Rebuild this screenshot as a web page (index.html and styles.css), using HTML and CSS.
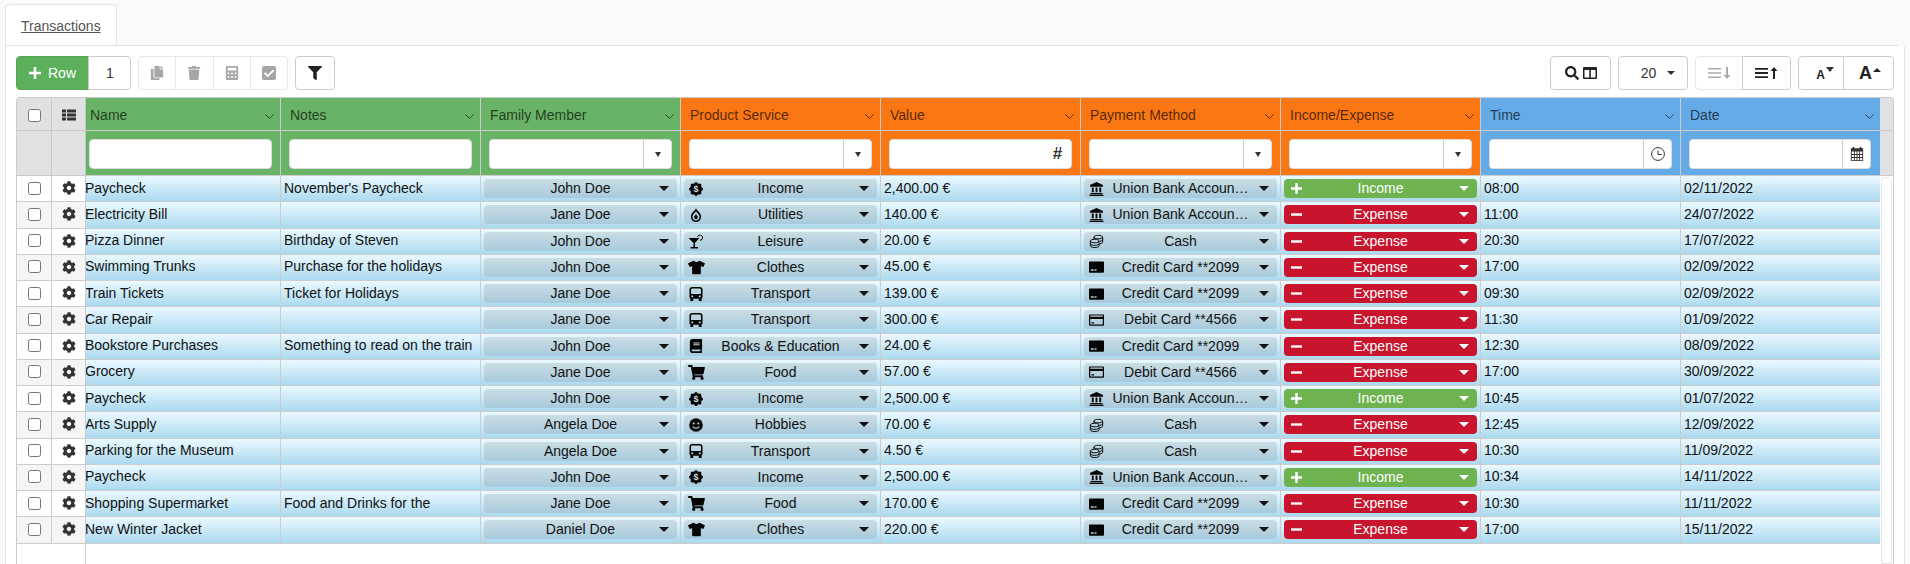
FILE: index.html
```
<!DOCTYPE html>
<html lang="en">
<head>
<meta charset="utf-8">
<title>Transactions</title>
<link rel="stylesheet" href="styles.css">
</head>
<body>
<svg class="defs" xmlns="http://www.w3.org/2000/svg">
<symbol id="gear" viewBox="0 0 512 512"><path d="M487.4 315.7l-42.6-24.6c4.3-23.2 4.3-47 0-70.2l42.6-24.6c4.9-2.8 7.1-8.6 5.5-14-11.1-35.6-30-67.8-54.7-94.6-3.8-4.1-10-5.1-14.8-2.3L380.8 110c-17.9-15.4-38.5-27.3-60.8-35.1V25.8c0-5.6-3.9-10.5-9.4-11.7-36.7-8.2-74.3-7.8-109.2 0-5.5 1.2-9.4 6.1-9.4 11.7V75c-22.2 7.9-42.8 19.8-60.8 35.1L88.7 85.5c-4.9-2.8-11-1.9-14.8 2.3-24.7 26.7-43.6 58.9-54.7 94.6-1.7 5.4.6 11.2 5.5 14L67.3 221c-4.3 23.2-4.3 47 0 70.2l-42.6 24.6c-4.9 2.8-7.1 8.6-5.5 14 11.1 35.6 30 67.8 54.7 94.6 3.8 4.1 10 5.1 14.8 2.3l42.6-24.6c17.9 15.4 38.5 27.3 60.8 35.1v49.2c0 5.6 3.9 10.5 9.4 11.7 36.7 8.2 74.3 7.8 109.2 0 5.5-1.2 9.4-6.1 9.4-11.7v-49.2c22.2-7.9 42.8-19.8 60.8-35.1l42.6 24.6c4.9 2.8 11 1.9 14.8-2.3 24.7-26.7 43.6-58.9 54.7-94.6 1.5-5.5-.7-11.3-5.6-14.1zM256 336c-44.1 0-80-35.9-80-80s35.9-80 80-80 80 35.9 80 80-35.9 80-80 80z"/></symbol>
<symbol id="copy" viewBox="0 0 448 512"><path d="M320 448v40c0 13.255-10.745 24-24 24H24c-13.255 0-24-10.745-24-24V120c0-13.255 10.745-24 24-24h72v296c0 30.879 25.121 56 56 56h168zm0-344V0H152c-13.255 0-24 10.745-24 24v368c0 13.255 10.745 24 24 24h272c13.255 0 24-10.745 24-24V128H344c-13.2 0-24-10.8-24-24zm120.971-31.029L375.029 7.029A24 24 0 0 0 358.059 0H352v96h96v-6.059a24 24 0 0 0-7.029-16.97z"/></symbol>
<symbol id="trash" viewBox="0 0 448 512"><path d="M432 32H312l-9.4-18.7A24 24 0 0 0 281.1 0H166.8a23.72 23.72 0 0 0-21.4 13.3L136 32H16A16 16 0 0 0 0 48v32a16 16 0 0 0 16 16h416a16 16 0 0 0 16-16V48a16 16 0 0 0-16-16zM53.2 467a48 48 0 0 0 47.9 45h245.8a48 48 0 0 0 47.9-45L416 128H32z"/></symbol>
<symbol id="calc" viewBox="0 0 14 16"><path fill-rule="evenodd" d="M1.5 0h11A1.5 1.5 0 0 1 14 1.500v13a1.500 1.500 0 0 1-1.500 1.500h-11A1.500 1.500 0 0 1 0 14.500v-13A1.500 1.500 0 0 1 1.500 0z M2 2v3h10V2z M2 7.500v2h2v-2z M6 7.500v2h2v-2z M10 7.500v2h2v-2z M2 11.500v2h2v-2z M6 11.500v2h2v-2z M10 11.500v2h2v-2z"/></symbol>
<symbol id="check" viewBox="0 0 14 14"><path fill-rule="evenodd" d="M2 0h10a2 2 0 0 1 2 2v10a2 2 0 0 1-2 2H2a2 2 0 0 1-2-2V2a2 2 0 0 1 2-2z M11 3.500 5.700 8.800 3.200 6.300 1.900 7.600l3.800 3.800 6.600-6.600z"/></symbol>
<symbol id="filter" viewBox="0 0 512 512"><path d="M487.976 0H24.028C2.71 0-8.047 25.866 7.058 40.971L192 225.941V432c0 7.831 3.821 15.17 10.237 19.662l80 55.98C298.02 518.69 320 507.493 320 487.98V225.941l184.947-184.97C520.021 25.896 509.338 0 487.976 0z"/></symbol>
<symbol id="search" viewBox="0 0 512 512"><path d="M505 442.7L405.3 343c-4.5-4.5-10.6-7-17-7H372c27.6-35.3 44-79.7 44-128C416 93.1 322.9 0 208 0S0 93.1 0 208s93.1 208 208 208c48.3 0 92.7-16.4 128-44v16.3c0 6.4 2.500 12.500 7 17l99.7 99.7c9.4 9.4 24.600 9.400 33.900 0l28.300-28.300c9.400-9.400 9.400-24.600.1-34zM208 336c-70.700 0-128-57.200-128-128 0-70.700 57.200-128 128-128 70.700 0 128 57.200 128 128 0 70.700-57.200 128-128 128z"/></symbol>
<symbol id="columns" viewBox="0 0 14 12"><path fill-rule="evenodd" d="M1 0h12a1 1 0 0 1 1 1v10a1 1 0 0 1-1 1H1a1 1 0 0 1-1-1V1a1 1 0 0 1 1-1z M1.500 3v7.500h4.700V3z M7.800 3v7.500h4.700V3z"/></symbol>
<symbol id="thlist" viewBox="0 0 14 11"><path d="M0 0h4v3H0z M5 0h9v3H5z M0 4h4v3H0z M5 4h9v3H5z M0 8h4v3H0z M5 8h9v3H5z"/></symbol>
<symbol id="lines-down" viewBox="0 0 23 12"><path d="M0 1h13v1.600H0z M0 5.200h13v1.600H0z M0 9.400h13v1.600H0z M18 0h2v8h2.500L19 12l-3.500-4H18z"/></symbol>
<symbol id="lines-up" viewBox="0 0 23 12"><path d="M0 1h13v1.800H0z M0 5.100h13v1.800H0z M0 9.200h13v1.800H0z M18 12h2V4h2.500L19 0l-3.500 4H18z"/></symbol>
<symbol id="chev" viewBox="0 0 9 5"><path d="M.5.500 4.500 4.500 8.500.500" fill="none" stroke="currentColor"/></symbol>
<symbol id="plus" viewBox="0 0 12 12"><path d="M4.700 0h2.600v4.700H12v2.600H7.300V12H4.700V7.300H0V4.700h4.700z"/></symbol>
<symbol id="minus" viewBox="0 0 12 12"><path d="M0 4.700h12v2.600H0z"/></symbol>
<symbol id="clock" viewBox="0 0 14 14"><circle cx="7" cy="7" r="6.400" fill="none" stroke="currentColor"/><path d="M7 3.500V7.500H10.500" fill="none" stroke="currentColor"/></symbol>
<symbol id="calendar" viewBox="0 0 14 16"><path fill-rule="evenodd" d="M2 0h2v1.500h6V0h2v1.500h2V16H0V1.500h2z M1 5v3h2.500V5z M4.500 5v3h2V5z M7.500 5v3h2V5z M10.500 5v3H13V5z M1 9v2.500h2.500V9z M4.500 9v2.500h2V9z M7.500 9v2.500h2V9z M10.500 9v2.500H13V9z M1 12.500V15h2.500v-2.500z M4.500 12.500V15h2v-2.500z M7.500 12.500V15h2v-2.500z M10.500 12.500V15H13v-2.500z"/></symbol>
<symbol id="badge" viewBox="0 0 14 14"><circle cx="7" cy="7" r="6"/><circle cx="7" cy="1.500" r="1.500"/><circle cx="7" cy="12.500" r="1.500"/><circle cx="1.500" cy="7" r="1.500"/><circle cx="12.500" cy="7" r="1.500"/><circle cx="3.100" cy="3.100" r="1.500"/><circle cx="10.900" cy="3.100" r="1.500"/><circle cx="3.100" cy="10.900" r="1.500"/><circle cx="10.900" cy="10.900" r="1.500"/><text x="7" y="10" text-anchor="middle" font-size="9" font-weight="700" font-family="Liberation Sans, sans-serif" fill="#c8dce3">$</text></symbol>
<symbol id="drop" viewBox="0 0 12 15"><path fill-rule="evenodd" d="M6 0c.3 2.500 5.500 5 5.500 9.500a5.500 5.500 0 0 1-11 0C.5 5 5.700 2.500 6 0z M6 3.500C5 5.500 2.200 7 2.200 9.500a3.800 3.800 0 0 0 7.600 0C9.800 7 7 5.500 6 3.500z M6 6.500c.3 1 2 2 2 3.500a2 2 0 0 1-4 0c0-1.500 1.700-2.500 2-3.500z"/></symbol>
<symbol id="cocktail" viewBox="0 0 16 15"><path d="M0 4h11L6.500 9v4h3v1.500H2V13h3V9z"/><path d="M9 3a2.600 2.600 0 1 1 2.500 3.300" fill="none" stroke="currentColor"/></symbol>
<symbol id="shirt" viewBox="0 0 640 512"><path d="M631.200 96.500L436.500.1c-5.500-2.700-12.200-1-15.700 4C408.100 22.600 369.600 48 320 48S231.900 22.600 219.200 4.100c-3.500-5-10.200-6.800-15.700-4L8.800 96.500c-7.100 3.500-10 12-6.500 19l57.200 114.500c3.500 7.100 12 10 19 6.500l56.600-27.700c9.400-4.600 20.500 2.200 20.500 12.700V480c0 17.700 14.300 32 32 32h264c17.700 0 32-14.300 32-32V220.600c0-10.600 11-17.300 20.500-12.700l56.600 27.700c7.100 3.500 15.600.6 19-6.500l57.300-114.500c3.500-7.100.6-15.600-6.600-19.100z"/></symbol>
<symbol id="bus" viewBox="0 0 14 15"><path fill-rule="evenodd" d="M3 0h8a3 3 0 0 1 3 3v8a1.500 1.500 0 0 1-1 1.400V15h-3v-2.500H4V15H1v-2.600A1.500 1.500 0 0 1 0 11V3a3 3 0 0 1 3-3z M3 1.700A1.300 1.300 0 0 0 1.700 3v4.500h10.600V3A1.300 1.300 0 0 0 11 1.700z M2 9v2h2V9z M10 9v2h2V9z"/></symbol>
<symbol id="book" viewBox="0 0 448 512"><path d="M448 360V24c0-13.300-10.700-24-24-24H96C43 0 0 43 0 96v320c0 53 43 96 96 96h328c13.300 0 24-10.700 24-24v-16c0-7.500-3.500-14.300-8.900-18.700-4.200-15.400-4.200-59.300 0-74.700 5.400-4.300 8.900-11.100 8.900-18.600zM128 134c0-3.300 2.700-6 6-6h212c3.300 0 6 2.700 6 6v20c0 3.300-2.700 6-6 6H134c-3.300 0-6-2.700-6-6v-20zm0 64c0-3.300 2.700-6 6-6h212c3.300 0 6 2.700 6 6v20c0 3.300-2.700 6-6 6H134c-3.300 0-6-2.700-6-6v-20zm253.400 250H96c-17.700 0-32-14.300-32-32 0-17.600 14.400-32 32-32h285.400c-1.900 17.100-1.900 46.900 0 64z"/></symbol>
<symbol id="cart" viewBox="0 0 576 512"><path d="M528.120 301.319l47.273-208C578.806 78.301 567.391 64 551.990 64H159.208l-9.166-44.810C147.758 8.021 137.930 0 126.529 0H24C10.745 0 0 10.745 0 24v16c0 13.255 10.745 24 24 24h69.883l70.248 343.435C147.325 417.100 136 435.222 136 456c0 30.928 25.072 56 56 56s56-25.072 56-56c0-15.674-6.447-29.835-16.824-40h209.647C430.447 426.165 424 440.326 424 456c0 30.928 25.072 56 56 56s56-25.072 56-56c0-22.172-12.888-41.332-31.579-50.405l5.517-24.276c3.413-15.018-8.002-29.319-23.403-29.319H218.117l-6.545-32h293.145c11.206 0 20.920-7.754 23.403-18.681z"/></symbol>
<symbol id="smile" viewBox="0 0 14 14"><circle cx="7" cy="7" r="6.800"/><circle cx="4.700" cy="5.400" r="1" fill="#c8dce3"/><circle cx="9.300" cy="5.400" r="1" fill="#c8dce3"/><path d="M3.800 8.600c1.600 2.100 4.800 2.100 6.400 0" fill="none" stroke="#c8dce3" stroke-width="1.100"/></symbol>
<symbol id="bank" viewBox="0 0 16 15"><path d="M8 0L1 3.300V5h14V3.300z M3 6h2v5H3z M7 6h2v5H7z M11 6h2v5h-2z M1.500 11.800h13V13h-13z M.5 13.700h15V15H.5z"/></symbol>
<symbol id="coins" viewBox="0 0 16 16"><g fill="none" stroke="currentColor" stroke-width="1.100"><path d="M5 3.500c0-1.100 2.200-2 5-2s5 .9 5 2-2.200 2-5 2-5-.9-5-2z M5 3.500v2.500 M15 3.500v6c0 .8-1 1.400-3 1.800 M15 6.500c0 .8-1 1.400-3 1.800"/><path d="M1 8c0-1.100 2.200-2 5-2s5 .9 5 2-2.200 2-5 2-5-.9-5-2z M1 8v5.500c0 1.100 2.200 2 5 2s5-.9 5-2V8 M1 11c0 1.100 2.200 2 5 2s5-.9 5-2"/></g></symbol>
<symbol id="credit" viewBox="0 0 16 12"><path fill-rule="evenodd" d="M1 0h14a1 1 0 0 1 1 1v10a1 1 0 0 1-1 1H1a1 1 0 0 1-1-1V1a1 1 0 0 1 1-1z M2 8.500V10h3V8.500z M6 8.500V10h2V8.500z"/></symbol>
<symbol id="debit" viewBox="0 0 16 12"><path fill-rule="evenodd" d="M1 0h14a1 1 0 0 1 1 1v10a1 1 0 0 1-1 1H1a1 1 0 0 1-1-1V1a1 1 0 0 1 1-1z M1.300 1.200v1.300h13.400V1.200z M1.300 5v5.800h13.400V5z M2.500 8.500V9.700h3V8.500z"/></symbol>
</svg>

<nav class="tabs"><a class="tab" href="#">Transactions</a></nav>

<main class="panel">
<div class="toolbar">
  <div class="group">
    <button class="btn primary"><svg class="ic ic12"><use href="#plus"/></svg>Row</button>
    <span class="btn count">1</span>
  </div>
  <div class="group disabled">
    <button class="btn sq"><svg class="ic ic14"><use href="#copy"/></svg></button>
    <button class="btn sq"><svg class="ic ic14"><use href="#trash"/></svg></button>
    <button class="btn sq"><svg class="ic ic14"><use href="#calc"/></svg></button>
    <button class="btn sq"><svg class="ic ic14"><use href="#check"/></svg></button>
  </div>
  <button class="btn filter"><svg class="ic ic14"><use href="#filter"/></svg></button>
  <div class="spacer"></div>
  <button class="btn search"><svg class="ic ic14"><use href="#search"/></svg><svg class="ic ic14"><use href="#columns"/></svg></button>
  <button class="btn pager">20<span class="caret small"></span></button>
  <div class="group">
    <button class="btn sort off"><svg class="ic sortic"><use href="#lines-down"/></svg></button>
    <button class="btn sort on"><svg class="ic sortic"><use href="#lines-up"/></svg></button>
  </div>
  <div class="group">
    <button class="btn font dec"><span class="a-small">A</span><span class="caret small up-small"></span></button>
    <button class="btn font inc-f"><span class="a-big">A</span><span class="caret-up"></span></button>
  </div>
</div>

<section class="grid">
  <div class="row head h1">
    <div class="c side"><input type="checkbox"></div>
    <div class="c side"><svg class="ic ic14"><use href="#thlist"/></svg></div>
    <div class="c title green first">Name<svg class="chev"><use href="#chev"/></svg></div>
    <div class="c title green">Notes<svg class="chev"><use href="#chev"/></svg></div>
    <div class="c title green">Family Member<svg class="chev"><use href="#chev"/></svg></div>
    <div class="c title orange">Product Service<svg class="chev"><use href="#chev"/></svg></div>
    <div class="c title orange">Value<svg class="chev"><use href="#chev"/></svg></div>
    <div class="c title orange">Payment Method<svg class="chev"><use href="#chev"/></svg></div>
    <div class="c title orange">Income/Expense<svg class="chev"><use href="#chev"/></svg></div>
    <div class="c title blue">Time<svg class="chev"><use href="#chev"/></svg></div>
    <div class="c title blue last">Date<svg class="chev"><use href="#chev"/></svg></div>
    <div class="c gutter"></div>
  </div>
  <div class="row head h2">
    <div class="c side"></div>
    <div class="c side"></div>
    <div class="c flt green first"><div class="fld"><input></div></div>
    <div class="c flt green"><div class="fld"><input></div></div>
    <div class="c flt green"><div class="fld"><input><span class="addon"><span class="caret dark"></span></span></div></div>
    <div class="c flt orange"><div class="fld"><input><span class="addon"><span class="caret dark"></span></span></div></div>
    <div class="c flt orange"><div class="fld"><input><span class="addon plain">#</span></div></div>
    <div class="c flt orange"><div class="fld"><input><span class="addon"><span class="caret dark"></span></span></div></div>
    <div class="c flt orange"><div class="fld"><input><span class="addon"><span class="caret dark"></span></span></div></div>
    <div class="c flt blue"><div class="fld"><input><span class="addon"><svg class="ic ic14"><use href="#clock"/></svg></span></div></div>
    <div class="c flt blue last"><div class="fld"><input><span class="addon"><svg class="ic ic14"><use href="#calendar"/></svg></span></div></div>
    <div class="c gutter"></div>
  </div>
  <div class="body">
    <div class="rows">

      <div class="row data"><div class="c side"><input type="checkbox"></div><div class="c side"><svg class="ic gear"><use href="#gear"/></svg></div><div class="c txt first">Paycheck</div><div class="c txt">November's Paycheck</div><div class="c sel"><div class="pill"><i></i><span>John Doe</span><b class="caret"></b></div></div><div class="c sel"><div class="pill"><svg class="ic pi"><use href="#badge"/></svg><span>Income</span><b class="caret"></b></div></div><div class="c txt">2,400.00 €</div><div class="c sel"><div class="pill"><svg class="ic pi w"><use href="#bank"/></svg><span>Union Bank Accoun…</span><b class="caret"></b></div></div><div class="c sel"><div class="pill inc"><svg class="ic pm"><use href="#plus"/></svg><span>Income</span><b class="caret"></b></div></div><div class="c txt">08:00</div><div class="c txt last">02/11/2022</div></div>

      <div class="row data"><div class="c side"><input type="checkbox"></div><div class="c side"><svg class="ic gear"><use href="#gear"/></svg></div><div class="c txt first">Electricity Bill</div><div class="c txt"></div><div class="c sel"><div class="pill"><i></i><span>Jane Doe</span><b class="caret"></b></div></div><div class="c sel"><div class="pill"><svg class="ic pi"><use href="#drop"/></svg><span>Utilities</span><b class="caret"></b></div></div><div class="c txt">140.00 €</div><div class="c sel"><div class="pill"><svg class="ic pi w"><use href="#bank"/></svg><span>Union Bank Accoun…</span><b class="caret"></b></div></div><div class="c sel"><div class="pill exp"><svg class="ic pm"><use href="#minus"/></svg><span>Expense</span><b class="caret"></b></div></div><div class="c txt">11:00</div><div class="c txt last">24/07/2022</div></div>

      <div class="row data"><div class="c side"><input type="checkbox"></div><div class="c side"><svg class="ic gear"><use href="#gear"/></svg></div><div class="c txt first">Pizza Dinner</div><div class="c txt">Birthday of Steven</div><div class="c sel"><div class="pill"><i></i><span>John Doe</span><b class="caret"></b></div></div><div class="c sel"><div class="pill"><svg class="ic pi xw"><use href="#cocktail"/></svg><span>Leisure</span><b class="caret"></b></div></div><div class="c txt">20.00 €</div><div class="c sel"><div class="pill"><svg class="ic pi w"><use href="#coins"/></svg><span>Cash</span><b class="caret"></b></div></div><div class="c sel"><div class="pill exp"><svg class="ic pm"><use href="#minus"/></svg><span>Expense</span><b class="caret"></b></div></div><div class="c txt">20:30</div><div class="c txt last">17/07/2022</div></div>

      <div class="row data"><div class="c side"><input type="checkbox"></div><div class="c side"><svg class="ic gear"><use href="#gear"/></svg></div><div class="c txt first">Swimming Trunks</div><div class="c txt">Purchase for the holidays</div><div class="c sel"><div class="pill"><i></i><span>John Doe</span><b class="caret"></b></div></div><div class="c sel"><div class="pill"><svg class="ic pi xw"><use href="#shirt"/></svg><span>Clothes</span><b class="caret"></b></div></div><div class="c txt">45.00 €</div><div class="c sel"><div class="pill"><svg class="ic pi w"><use href="#credit"/></svg><span>Credit Card **2099</span><b class="caret"></b></div></div><div class="c sel"><div class="pill exp"><svg class="ic pm"><use href="#minus"/></svg><span>Expense</span><b class="caret"></b></div></div><div class="c txt">17:00</div><div class="c txt last">02/09/2022</div></div>

      <div class="row data"><div class="c side"><input type="checkbox"></div><div class="c side"><svg class="ic gear"><use href="#gear"/></svg></div><div class="c txt first">Train Tickets</div><div class="c txt">Ticket for Holidays</div><div class="c sel"><div class="pill"><i></i><span>Jane Doe</span><b class="caret"></b></div></div><div class="c sel"><div class="pill"><svg class="ic pi"><use href="#bus"/></svg><span>Transport</span><b class="caret"></b></div></div><div class="c txt">139.00 €</div><div class="c sel"><div class="pill"><svg class="ic pi w"><use href="#credit"/></svg><span>Credit Card **2099</span><b class="caret"></b></div></div><div class="c sel"><div class="pill exp"><svg class="ic pm"><use href="#minus"/></svg><span>Expense</span><b class="caret"></b></div></div><div class="c txt">09:30</div><div class="c txt last">02/09/2022</div></div>

      <div class="row data"><div class="c side"><input type="checkbox"></div><div class="c side"><svg class="ic gear"><use href="#gear"/></svg></div><div class="c txt first">Car Repair</div><div class="c txt"></div><div class="c sel"><div class="pill"><i></i><span>Jane Doe</span><b class="caret"></b></div></div><div class="c sel"><div class="pill"><svg class="ic pi"><use href="#bus"/></svg><span>Transport</span><b class="caret"></b></div></div><div class="c txt">300.00 €</div><div class="c sel"><div class="pill"><svg class="ic pi w"><use href="#debit"/></svg><span>Debit Card **4566</span><b class="caret"></b></div></div><div class="c sel"><div class="pill exp"><svg class="ic pm"><use href="#minus"/></svg><span>Expense</span><b class="caret"></b></div></div><div class="c txt">11:30</div><div class="c txt last">01/09/2022</div></div>

      <div class="row data"><div class="c side"><input type="checkbox"></div><div class="c side"><svg class="ic gear"><use href="#gear"/></svg></div><div class="c txt first">Bookstore Purchases</div><div class="c txt">Something to read on the train</div><div class="c sel"><div class="pill"><i></i><span>John Doe</span><b class="caret"></b></div></div><div class="c sel"><div class="pill"><svg class="ic pi"><use href="#book"/></svg><span>Books &amp; Education</span><b class="caret"></b></div></div><div class="c txt">24.00 €</div><div class="c sel"><div class="pill"><svg class="ic pi w"><use href="#credit"/></svg><span>Credit Card **2099</span><b class="caret"></b></div></div><div class="c sel"><div class="pill exp"><svg class="ic pm"><use href="#minus"/></svg><span>Expense</span><b class="caret"></b></div></div><div class="c txt">12:30</div><div class="c txt last">08/09/2022</div></div>

      <div class="row data"><div class="c side"><input type="checkbox"></div><div class="c side"><svg class="ic gear"><use href="#gear"/></svg></div><div class="c txt first">Grocery</div><div class="c txt"></div><div class="c sel"><div class="pill"><i></i><span>Jane Doe</span><b class="caret"></b></div></div><div class="c sel"><div class="pill"><svg class="ic pi xw"><use href="#cart"/></svg><span>Food</span><b class="caret"></b></div></div><div class="c txt">57.00 €</div><div class="c sel"><div class="pill"><svg class="ic pi w"><use href="#debit"/></svg><span>Debit Card **4566</span><b class="caret"></b></div></div><div class="c sel"><div class="pill exp"><svg class="ic pm"><use href="#minus"/></svg><span>Expense</span><b class="caret"></b></div></div><div class="c txt">17:00</div><div class="c txt last">30/09/2022</div></div>

      <div class="row data"><div class="c side"><input type="checkbox"></div><div class="c side"><svg class="ic gear"><use href="#gear"/></svg></div><div class="c txt first">Paycheck</div><div class="c txt"></div><div class="c sel"><div class="pill"><i></i><span>John Doe</span><b class="caret"></b></div></div><div class="c sel"><div class="pill"><svg class="ic pi"><use href="#badge"/></svg><span>Income</span><b class="caret"></b></div></div><div class="c txt">2,500.00 €</div><div class="c sel"><div class="pill"><svg class="ic pi w"><use href="#bank"/></svg><span>Union Bank Accoun…</span><b class="caret"></b></div></div><div class="c sel"><div class="pill inc"><svg class="ic pm"><use href="#plus"/></svg><span>Income</span><b class="caret"></b></div></div><div class="c txt">10:45</div><div class="c txt last">01/07/2022</div></div>

      <div class="row data"><div class="c side"><input type="checkbox"></div><div class="c side"><svg class="ic gear"><use href="#gear"/></svg></div><div class="c txt first">Arts Supply</div><div class="c txt"></div><div class="c sel"><div class="pill"><i></i><span>Angela Doe</span><b class="caret"></b></div></div><div class="c sel"><div class="pill"><svg class="ic pi"><use href="#smile"/></svg><span>Hobbies</span><b class="caret"></b></div></div><div class="c txt">70.00 €</div><div class="c sel"><div class="pill"><svg class="ic pi w"><use href="#coins"/></svg><span>Cash</span><b class="caret"></b></div></div><div class="c sel"><div class="pill exp"><svg class="ic pm"><use href="#minus"/></svg><span>Expense</span><b class="caret"></b></div></div><div class="c txt">12:45</div><div class="c txt last">12/09/2022</div></div>

      <div class="row data"><div class="c side"><input type="checkbox"></div><div class="c side"><svg class="ic gear"><use href="#gear"/></svg></div><div class="c txt first">Parking for the Museum</div><div class="c txt"></div><div class="c sel"><div class="pill"><i></i><span>Angela Doe</span><b class="caret"></b></div></div><div class="c sel"><div class="pill"><svg class="ic pi"><use href="#bus"/></svg><span>Transport</span><b class="caret"></b></div></div><div class="c txt">4.50 €</div><div class="c sel"><div class="pill"><svg class="ic pi w"><use href="#coins"/></svg><span>Cash</span><b class="caret"></b></div></div><div class="c sel"><div class="pill exp"><svg class="ic pm"><use href="#minus"/></svg><span>Expense</span><b class="caret"></b></div></div><div class="c txt">10:30</div><div class="c txt last">11/09/2022</div></div>

      <div class="row data"><div class="c side"><input type="checkbox"></div><div class="c side"><svg class="ic gear"><use href="#gear"/></svg></div><div class="c txt first">Paycheck</div><div class="c txt"></div><div class="c sel"><div class="pill"><i></i><span>John Doe</span><b class="caret"></b></div></div><div class="c sel"><div class="pill"><svg class="ic pi"><use href="#badge"/></svg><span>Income</span><b class="caret"></b></div></div><div class="c txt">2,500.00 €</div><div class="c sel"><div class="pill"><svg class="ic pi w"><use href="#bank"/></svg><span>Union Bank Accoun…</span><b class="caret"></b></div></div><div class="c sel"><div class="pill inc"><svg class="ic pm"><use href="#plus"/></svg><span>Income</span><b class="caret"></b></div></div><div class="c txt">10:34</div><div class="c txt last">14/11/2022</div></div>

      <div class="row data"><div class="c side"><input type="checkbox"></div><div class="c side"><svg class="ic gear"><use href="#gear"/></svg></div><div class="c txt first">Shopping Supermarket</div><div class="c txt">Food and Drinks for the</div><div class="c sel"><div class="pill"><i></i><span>Jane Doe</span><b class="caret"></b></div></div><div class="c sel"><div class="pill"><svg class="ic pi xw"><use href="#cart"/></svg><span>Food</span><b class="caret"></b></div></div><div class="c txt">170.00 €</div><div class="c sel"><div class="pill"><svg class="ic pi w"><use href="#credit"/></svg><span>Credit Card **2099</span><b class="caret"></b></div></div><div class="c sel"><div class="pill exp"><svg class="ic pm"><use href="#minus"/></svg><span>Expense</span><b class="caret"></b></div></div><div class="c txt">10:30</div><div class="c txt last">11/11/2022</div></div>

      <div class="row data"><div class="c side"><input type="checkbox"></div><div class="c side"><svg class="ic gear"><use href="#gear"/></svg></div><div class="c txt first">New Winter Jacket</div><div class="c txt"></div><div class="c sel"><div class="pill"><i></i><span>Daniel Doe</span><b class="caret"></b></div></div><div class="c sel"><div class="pill"><svg class="ic pi xw"><use href="#shirt"/></svg><span>Clothes</span><b class="caret"></b></div></div><div class="c txt">220.00 €</div><div class="c sel"><div class="pill"><svg class="ic pi w"><use href="#credit"/></svg><span>Credit Card **2099</span><b class="caret"></b></div></div><div class="c sel"><div class="pill exp"><svg class="ic pm"><use href="#minus"/></svg><span>Expense</span><b class="caret"></b></div></div><div class="c txt">17:00</div><div class="c txt last">15/11/2022</div></div>

      <div class="rest"></div>
    </div>
    <div class="scroll"><div class="thumb"></div></div>
  </div>
</section>
</main>
</body>
</html>
```
FILE: styles.css
```
* { box-sizing: border-box; }
html, body { margin: 0; height: 100%; }
body {
  display: flex;
  flex-direction: column;
  height: 100vh;
  overflow: hidden;
  background: #fafafa;
  color: #111;
  font: 14px/20px "Liberation Sans", Arial, sans-serif;
}
.defs { display: none; }
.ic { display: block; fill: currentColor; flex: none; }
.ic12 { width: 12px; height: 12px; }
.ic14 { width: 14px; height: 14px; }

/* tabs */
.tabs {
  flex: none;
  width: 1893px;
  height: 46px;
  margin-left: 5px;
  padding-top: 4px;
  border-bottom: 1px solid #e0e0e0;
}
.tab {
  display: block;
  width: 112px;
  height: 41px;
  padding: 11px 0 0 15px;
  background: #fff;
  border: 1px solid #e4e4e4;
  border-bottom: 0;
  border-radius: 4px 4px 0 0;
  color: #555;
  text-decoration: underline;
}

/* panel */
.panel {
  flex: 1;
  min-height: 0;
  display: flex;
  flex-direction: column;
  margin: 0 5px;
  padding: 10px 10px 0;
  background: #fff;
  border-left: 1px solid #e4e4e4;
  border-right: 1px solid #e4e4e4;
}

/* toolbar */
.toolbar { flex: none; display: flex; gap: 7px; height: 34px; margin-bottom: 7px; }
.spacer { flex: 1; }
.group { display: flex; }
.btn {
  display: flex;
  align-items: center;
  justify-content: center;
  height: 34px;
  padding: 0;
  background: #fff;
  border: 1px solid #ccc;
  border-radius: 4px;
  color: #222;
  font: inherit;
}
.group .btn:not(:first-child) { border-top-left-radius: 0; border-bottom-left-radius: 0; margin-left: -1px; }
.group .btn:not(:last-child) { border-top-right-radius: 0; border-bottom-right-radius: 0; }
.primary { width: 73px; gap: 7px; background: #5cb05c; border-color: #55a755; color: #fff; }
.count { width: 43px; padding-left: 1px; color: #333; }
.disabled .btn { width: 38.25px; border-color: #e6e6e6; color: #a6a6a6; }
.filter { width: 40px; color: #222; }
.search { width: 61px; gap: 4px; }
.pager { width: 70px; gap: 11px; padding-left: 10px; color: #333; }
.sort.off { width: 48px; border-color: #e6e6e6; color: #aaa; }
.sort.on { width: 49px; }
.sortic { width: 23px; height: 12px; }
.font { align-items: flex-start; gap: 1px; font-weight: 700; }
.font.dec { width: 46px; padding-left: 8px; }
.font.inc-f { width: 51px; padding-left: 3px; }
.a-small { font-size: 12px; line-height: 12px; margin-top: 12px; }
.a-big { font-size: 18px; line-height: 20px; margin-top: 6px; }
.caret {
  display: block;
  width: 0;
  height: 0;
  border-left: 5px solid transparent;
  border-right: 5px solid transparent;
  border-top: 5px solid #111;
}
.caret.small { border-left-width: 4px; border-right-width: 4px; border-top-width: 4px; border-top-color: #333; }
.up-small { margin-top: 10px; border-top-width: 5px !important; }
.caret-up {
  width: 0;
  height: 0;
  margin-top: 11px;
  border-left: 4px solid transparent;
  border-right: 4px solid transparent;
  border-bottom: 4px solid #222;
}
.caret.dark { border-left-width: 3.5px; border-right-width: 3.5px; border-top-color: #333; }

/* grid */
.grid {
  flex: 1;
  min-height: 0;
  display: flex;
  flex-direction: column;
  border: 1px solid #ccc;
  border-bottom: 0;
  border-radius: 4px 4px 0 0;
  overflow: hidden;
}
.row {
  display: grid;
  grid-template-columns: 35px 34px 195px repeat(7, 200px) 199px;
}
.head { grid-template-columns: 35px 34px 195px repeat(7, 200px) 199px 13px; flex: none; }
.h1 { height: 33px; }
.h2 { height: 45px; }
.h1 .c { padding-top: 2px; }
.c { display: flex; align-items: center; min-width: 0; border-right: 1px solid #ccc; border-bottom: 1px solid #ccc; }
.c.last { border-right: 0; }
.side { justify-content: center; color: #333; }
.side input { margin: 0; width: 13px; height: 13px; }
.head .side { background: #dfe1e2; border-color: #c6c8c9; }
.gutter { background: #dfe1e2; border-right: 0; }
.green { background: #69b366; }
.orange { background: #fb7713; }
.blue { background: #65abe8; }
.title {
  justify-content: space-between;
  padding: 2px 6px 0 9px;
  color: rgba(0, 0, 0, .68);
}
.title.first { padding-left: 4px; }
.title.last { padding-right: 6px; }
.chev { width: 9px; height: 5px; color: rgba(0, 0, 0, .6); margin-top: 2px; }
.flt { padding: 2px 8px 0; }
.flt.first { padding-left: 3px; }
.flt.last { padding-right: 9px; padding-left: 8px; }
.fld {
  display: flex;
  width: 100%;
  height: 30px;
  background: #fff;
  border: 1px solid #ddd;
  border-radius: 4px;
  overflow: hidden;
}
.fld input { flex: 1; min-width: 0; border: 0; padding: 0 6px; background: #fff; outline: 0; }
.addon {
  flex: none;
  display: flex;
  align-items: center;
  justify-content: center;
  width: 28px;
  border-left: 1px solid #ccc;
  color: #333;
}
.addon.plain { border-left-color: transparent; font-size: 17px; font-weight: 700; }

/* body */
.body { flex: 1; min-height: 0; display: flex; }
.rows { flex: 1; min-width: 0; display: flex; flex-direction: column; }
.data { flex: none; height: 26.25px; }
.data .txt, .data .sel {
  background: linear-gradient(#ebf9ff, #abd9ef);
}
.data .side { background: #fff; border-bottom-color: #ccc; padding-bottom: 1px; }
.data:nth-child(even) .side { background: #f5f5f5; }
.gear { width: 14px; height: 14px; color: #333; }
.txt { padding: 0 3px 2px; color: #111; white-space: nowrap; overflow: hidden; }
.txt.first { padding-left: 0; text-indent: -1px; }
.sel { padding: 0 3px; }
.pill {
  display: grid;
  grid-template-columns: 28px minmax(0, 1fr) 28px;
  align-items: center;
  width: 100%;
  height: 19px;
  border-radius: 4px;
  background: linear-gradient(#cadde3, #a8cadd);
  color: #111;
}
.pill span { text-align: center; white-space: nowrap; line-height: 19px; }
.pill .caret { justify-self: end; margin-right: 8px; }
.pi { width: 14px; height: 14px; margin-left: 5px; color: #050505; }
.pi.w { width: 15px; margin-left: 5px; }
.pi.xw { width: 17px; height: 15px; margin-left: 4px; }
.inc, .exp { color: #fff; background: #6fb351; }
.exp { background: #c8142d; }
.inc .caret, .exp .caret { border-top-color: #fff; }
.pm { width: 11px; height: 11px; margin-left: 7px; color: #fff; }
.rest { flex: 1; width: 69px; border-right: 1px solid #ccc; }
.scroll { flex: none; width: 13px; padding: 1px 1px 0 1px; background: #fff; }
.thumb { height: 100%; border: 1px solid #e6e6e6; border-radius: 5px 5px 0 0; }
```
